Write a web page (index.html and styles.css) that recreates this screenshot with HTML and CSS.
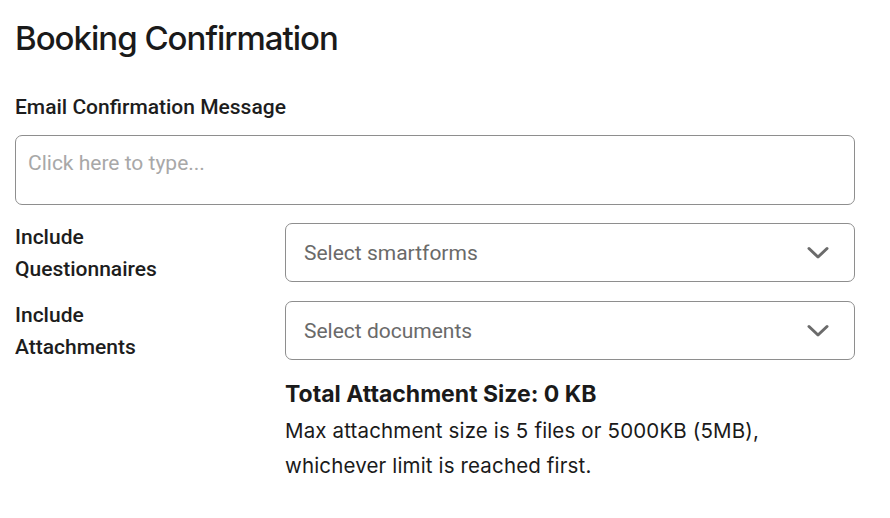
FILE: index.html
```html
<!DOCTYPE html>
<html lang="en">
<head>
<meta charset="utf-8">
<title>Booking Confirmation</title>
<link rel="stylesheet" href="styles.css">
</head>
<body>
<main class="page">
  <h1 class="title">Booking Confirmation</h1>
  <label class="field-label" for="msg">Email Confirmation Message</label>
  <div class="textarea" id="msg">Click here to type...</div>
  <div class="row">
    <div class="row-label">Include<br>Questionnaires</div>
    <div class="select">
      <span class="select-text">Select smartforms</span>
      <svg class="chev" width="22" height="14" viewBox="0 0 22 14"><path d="M2 2.5 L11 11 L20 2.5" fill="none" stroke="#6b6b6b" stroke-width="3" stroke-linecap="round" stroke-linejoin="round"/></svg>
    </div>
  </div>
  <div class="row">
    <div class="row-label">Include<br>Attachments</div>
    <div class="select">
      <span class="select-text">Select documents</span>
      <svg class="chev" width="22" height="14" viewBox="0 0 22 14"><path d="M2 2.5 L11 11 L20 2.5" fill="none" stroke="#6b6b6b" stroke-width="3" stroke-linecap="round" stroke-linejoin="round"/></svg>
    </div>
  </div>
  <div class="info">
    <div class="info-title">Total Attachment Size: 0 KB</div>
    <p class="info-text">Max attachment size is 5 files or 5000KB (5MB),<br>whichever limit is reached first.</p>
  </div>
</main>
</body>
</html>
```
FILE: styles.css
```css
* { box-sizing: border-box; }
html, body { margin: 0; padding: 0; background: #fff; }
body { color: #1d1d1d; }
.page {
  padding: 18px 35px 0 15px;
  display: flex;
  flex-direction: column;
}
.title {
  font-family: Inter, "Liberation Sans", sans-serif;
  font-weight: 500;
  font-size: 33px;
  letter-spacing: -1px;
  line-height: 40px;
  margin: 0;
  color: #1a1a1a;
}
.field-label {
  font-family: Roboto, "Liberation Sans", sans-serif;
  font-weight: 500;
  font-size: 21px;
  line-height: 24px;
  margin-top: 37px;
  color: #1d1d1d;
}
.textarea {
  margin-top: 16px;
  height: 70px;
  border: 1px solid #8e8e8e;
  border-radius: 7px;
  padding: 15px 12px;
  font-family: Roboto, "Liberation Sans", sans-serif;
  font-size: 21px;
  line-height: 24px;
  color: #a8a8a8;
}
.row {
  display: grid;
  grid-template-columns: 270px 1fr;
  align-items: start;
  margin-top: 18px;
}
.row + .row { margin-top: 19px; }
.row-label {
  height: 59px;
  font-family: Roboto, "Liberation Sans", sans-serif;
  font-weight: 500;
  font-size: 21px;
  line-height: 32px;
  margin-top: -2px;
  color: #1d1d1d;
}
.select {
  height: 59px;
  border: 1px solid #8e8e8e;
  border-radius: 7px;
  display: flex;
  align-items: center;
  justify-content: space-between;
  padding: 1px 25px 0 18px;
}
.select-text {
  font-family: Roboto, "Liberation Sans", sans-serif;
  font-size: 21px;
  color: #6a6a6a;
}
.chev { display: block; }
.info {
  margin-left: 270px;
  margin-top: 20px;
  font-family: Inter, "Liberation Sans", sans-serif;
  color: #1a1a1a;
}
.info-title {
  font-weight: 700;
  font-size: 23px;
  letter-spacing: 0px;
  line-height: 28px;
}
.info-text {
  margin: 5px 0 0;
  font-size: 20.5px;
  letter-spacing: 0.15px;
  line-height: 35px;
}
```
